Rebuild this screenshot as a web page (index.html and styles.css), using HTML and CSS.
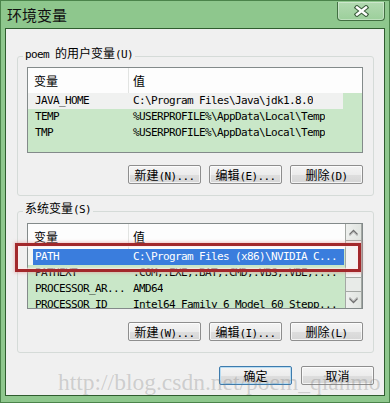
FILE: index.html
```html
<!DOCTYPE html>
<html lang="zh-CN">
<head>
<meta charset="utf-8">
<title>环境变量</title>
<link rel="stylesheet" href="styles.css">
</head>
<body>
<div class="window">
  <div class="titlebar">
    <div class="title">环境变量</div>
    <div class="close">
      <svg width="15" height="12" viewBox="0 0 15 12">
        <path d="M3 2.5 L12 9.5 M12 2.5 L3 9.5" stroke="#3d5e3d" stroke-width="4.6" stroke-linecap="square" fill="none"/>
        <path d="M3 2.5 L12 9.5 M12 2.5 L3 9.5" stroke="#ffffff" stroke-width="2.4" stroke-linecap="square" fill="none"/>
      </svg>
    </div>
  </div>
  <div class="client">
    <div class="group">
      <div class="legend"><span class="m">poem </span>的用户变量<span class="m">(U)</span></div>
      <div class="list">
        <div class="cols">
          <div class="lhead"><div class="c1">变量</div><div class="c2">值</div></div>
          <div class="row inactive"><div class="c1 m">JAVA_HOME</div><div class="c2 m">C:\Program Files\Java\jdk1.8.0</div></div>
          <div class="row"><div class="c1 m">TEMP</div><div class="c2 m">%USERPROFILE%\AppData\Local\Temp</div></div>
          <div class="row"><div class="c1 m">TMP</div><div class="c2 m">%USERPROFILE%\AppData\Local\Temp</div></div>
        </div>
      </div>
      <div class="btns">
        <button class="btn">新建<span class="m">(N)...</span></button>
        <button class="btn">编辑<span class="m">(E)...</span></button>
        <button class="btn">删除<span class="m">(D)</span></button>
      </div>
    </div>
    <div class="group g2">
      <div class="legend">系统变量<span class="m">(S)</span></div>
      <div class="list">
        <div class="cols">
          <div class="lhead"><div class="c1">变量</div><div class="c2">值</div></div>
          <div class="row focus"><div class="c1 m">PATH</div><div class="c2 m">C:\Program Files (x86)\NVIDIA C...</div></div>
          <div class="row"><div class="c1 m">PATHEXT</div><div class="c2 m">.COM;.EXE;.BAT;.CMD;.VBS;.VBE;....</div></div>
          <div class="row"><div class="c1 m">PROCESSOR_AR...</div><div class="c2 m">AMD64</div></div>
          <div class="row"><div class="c1 m">PROCESSOR_ID</div><div class="c2 m">Intel64 Family 6 Model 60 Stepp...</div></div>
        </div>
        <div class="vscroll">
          <div class="sbtn">
            <svg width="15" height="15" viewBox="0 0 15 15"><path d="M3.5 9.5 L7.5 5.5 L11.5 9.5" stroke="#707070" stroke-width="1.4" fill="none"/><path d="M3.5 11 L7.5 7 L11.5 11" stroke="#b0b0b0" stroke-width="1" fill="none"/></svg>
          </div>
          <div class="thumb"></div>
          <div class="track"></div>
          <div class="sbtn">
            <svg width="15" height="15" viewBox="0 0 15 15"><path d="M3.5 5.5 L7.5 9.5 L11.5 5.5" stroke="#707070" stroke-width="1.4" fill="none"/><path d="M3.5 4 L7.5 8 L11.5 4" stroke="#b0b0b0" stroke-width="1" fill="none"/></svg>
          </div>
        </div>
      </div>
      <div class="btns">
        <button class="btn">新建<span class="m">(W)...</span></button>
        <button class="btn">编辑<span class="m">(I)...</span></button>
        <button class="btn">删除<span class="m">(L)</span></button>
      </div>
    </div>
    <div class="dlg">
      <button class="btn default">确定</button>
      <button class="btn">取消</button>
    </div>
  </div>
  <div class="redbox"></div>
  <div class="watermark">http://blog.csdn.net/poem_qianmo</div>
</div>
</body>
</html>
```

FILE: styles.css
```css
* { box-sizing: border-box; }
html, body { margin: 0; padding: 0; }
body {
  width: 390px;
  height: 403px;
  overflow: hidden;
  background: #ffffff;
  font-family: "Noto Sans CJK SC", sans-serif;
  font-size: 12px;
  color: #000;
}
.m {
  font-family: "DejaVu Sans Mono", "Noto Sans CJK SC", monospace;
  font-size: 11px;
  letter-spacing: -0.62px;
}
.window {
  position: relative;
  width: 390px;
  height: 403px;
  border: 1px solid #4b844b;
  background: #8ec78d;
  padding: 0 4px 6px 4px;
  display: flex;
  flex-direction: column;
}
.titlebar {
  height: 27px;
  display: flex;
  justify-content: space-between;
  align-items: flex-start;
}
.title {
  font-size: 15px;
  line-height: 15px;
  margin: 6px 0 0 2px;
  color: #111;
}
.close {
  width: 48px;
  height: 19px;
  margin: 1px 0 0 0;
  border: 1px solid #426f42;
  border-top: none;
  border-radius: 0 0 4px 4px;
  background: linear-gradient(#b2dab1, #9ccf9b);
  box-shadow: inset 0 0 0 1px rgba(255,255,255,0.35);
  display: flex;
  align-items: center;
  justify-content: center;
}
.client {
  height: 368px;
  border: 1px solid #2f5d2f;
  background: #f0f0f0;
  display: flex;
  flex-direction: column;
}
.group {
  margin: 27px 10px 0 11px;
  border: 1px solid #d5dbd8;
  border-radius: 3px;
  padding: 0 10px 11px 9px;
  display: flex;
  flex-direction: column;
}
.g2 { margin-top: 15px; }
.legend {
  align-self: flex-start;
  margin: -11px 0 0 -4px;
  padding: 0 2px;
  height: 14px;
  line-height: 14px;
  background: #f0f0f0;
  white-space: nowrap;
}
.list {
  margin-top: 7px;
  height: 86px;
  border: 1px solid #838a8a;
  background: #c9e7c8;
  overflow: hidden;
  display: flex;
}
.g2 .list { margin-top: 8px; }
.cols { flex: 1; display: flex; flex-direction: column; min-width: 0; }
.lhead {
  height: 25px;
  flex: none;
  display: flex;
  align-items: center;
  background: #fdfdfd;
}
.lhead .c1 {
  width: 101px;
  height: 25px;
  line-height: 25px;
  padding-left: 6px;
  border-right: 1px solid #e2e4e2;
}
.lhead .c2 { padding-left: 4px; line-height: 25px; }
.row {
  width: 315px;
  height: 16px;
  flex: none;
  display: flex;
  line-height: 16px;
  white-space: nowrap;
  overflow: hidden;
}
.row .c1 { width: 101px; padding-left: 7px; flex: none; overflow: hidden; }
.row .c2 { padding-left: 4px; overflow: hidden; }
.row.inactive { background: #f0f1f0; }
.row.focus {
  width: 316px;
  background: linear-gradient(90deg, #f4f6f4 0 5px, #3a7ddd 5px);
  color: #fff;
}
.vscroll {
  width: 17px;
  flex: none;
  display: flex;
  flex-direction: column;
  background: #e8ebe8;
  border-left: 1px solid #a4a8a4;
  border-right: 1px solid #a4a8a4;
}
.sbtn {
  height: 17px;
  flex: none;
  border-bottom: 1px solid #a4a8a4;
  background: linear-gradient(90deg, #eef0ee, #e0e4e0);
  display: flex;
  align-items: center;
  justify-content: center;
}
.sbtn + .thumb { margin-top: 0; }
.vscroll .sbtn:last-child { border-top: 1px solid #a4a8a4; border-bottom: none; }
.thumb {
  height: 37px;
  flex: none;
  border-bottom: 1px solid #a4a8a4;
  background: #f3f4f3;
}
.track { flex: 1; }
.btns {
  display: flex;
  justify-content: flex-end;
  gap: 8px;
  margin-top: 12px;
}
.g2 .btns { margin-top: 13px; }
.btn {
  width: 73px;
  height: 19px;
  margin: 0;
  padding: 0;
  border: 1px solid #8e8e8e;
  border-radius: 2px;
  background: linear-gradient(#f4f4f4 0%, #ececec 50%, #dedede 51%, #d6d6d6 100%);
  box-shadow: inset 0 0 0 1px rgba(255,255,255,0.7);
  font-family: "Noto Sans CJK SC", sans-serif;
  font-size: 12px;
  line-height: 17px;
  color: #000;
  white-space: nowrap;
}
.dlg {
  display: flex;
  justify-content: flex-end;
  gap: 9px;
  margin: 13px 10px 0 0;
}
.btn.default {
  border-color: #3d7bad;
  box-shadow: inset 0 0 0 1px #b8dcf2;
}
.redbox {
  position: absolute;
  left: 14px;
  top: 242px;
  width: 346px;
  height: 29px;
  border: 3px solid #a2282b;
  box-shadow: 0 0 3px 1px rgba(230,150,150,0.55), inset 0 0 2px 1px rgba(255,235,235,0.9);
}
.watermark {
  position: absolute;
  left: 57px;
  top: 370px;
  font-family: "Liberation Serif", serif;
  font-size: 23.5px;
  line-height: 23px;
  color: rgba(120,120,120,0.3);
  white-space: nowrap;
}
```
